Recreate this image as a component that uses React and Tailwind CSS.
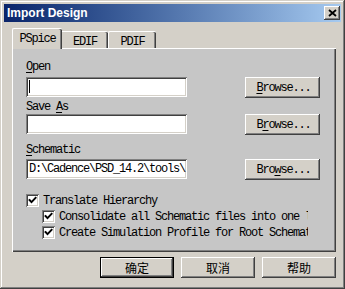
import React from "react";

const raised =
  "shadow-[inset_-1px_-1px_#404040,inset_1px_1px_#ffffff,inset_-2px_-2px_#808080,inset_2px_2px_#d4d0c8]";
const sunken =
  "shadow-[inset_1px_1px_#808080,inset_-1px_-1px_#ffffff,inset_2px_2px_#404040,inset_-2px_-2px_#d4d0c8]";
const mono = "font-['Liberation_Mono','DejaVu_Sans_Mono',monospace] text-[12px] tracking-[-1.2px] leading-[12px] text-black";

function Check() {
  return (
    <div className={`w-[13px] h-[13px] bg-white ${sunken} flex items-center justify-center shrink-0`}>
      <svg width="9" height="9" viewBox="0 0 9 9">
        <path d="M1.5 4 L3.5 6.2 L7.6 1.8" fill="none" stroke="#000" strokeWidth="1.9" strokeLinecap="square" />
      </svg>
    </div>
  );
}

function Btn({ children, def, cls = "" }) {
  return (
    <div
      className={`w-[74px] h-[21px] bg-[#d4d0c8] flex items-center justify-center ${
        def
          ? "shadow-[inset_0_0_0_1px_#000000,inset_-2px_-2px_#404040,inset_2px_2px_#ffffff,inset_-3px_-3px_#808080]"
          : raised
      } ${cls}`}
    >
      {children}
    </div>
  );
}

function Browse({ u }) {
  const letters = "Browse...".split("");
  return (
    <Btn cls="w-[75px] h-[21px]">
      <span className={`${mono} pl-[2px]`}>
        {letters.map((c, i) => (
          <span key={i} className={i === u ? "underline underline-offset-2" : ""}>
            {c}
          </span>
        ))}
      </span>
    </Btn>
  );
}

export default function App() {
  return (
    <div
      className={`w-[345px] h-[289px] bg-[#d4d0c8] p-[4px] flex flex-col shadow-[inset_-1px_-1px_#404040,inset_1px_1px_#d4d0c8,inset_-2px_-2px_#808080,inset_2px_2px_#ffffff] overflow-hidden`}
    >
      {/* title bar */}
      <div className="h-[18px] w-[337px] bg-gradient-to-r from-[#0a246a] to-[#a6caf0] flex items-center justify-between pl-[3px] pr-[1px]">
        <span className="font-['Liberation_Sans',Arial,sans-serif] font-bold text-[12px] text-white leading-[14px]">
          Import Design
        </span>
        <div className={`w-[16px] h-[14px] bg-[#d4d0c8] ${raised} flex items-center justify-center`}>
          <svg width="9" height="8" viewBox="0 0 9 8">
            <path d="M1 1 L8 7 M8 1 L1 7" stroke="#000" strokeWidth="1.8" fill="none" />
          </svg>
        </div>
      </div>

      {/* tabs */}
      <div className="ml-[8px] mt-[6px] flex items-end h-[20px] relative z-10">
        <div className="w-[50px] h-[21px] -mb-[1px] bg-[#d4d0c8] border-l border-t border-white rounded-tl-[2px] rounded-tr-[2px] shadow-[inset_-1px_0_#404040,inset_-2px_0_#808080] flex justify-center pt-[4px]">
          <span className={mono}>PSpice</span>
        </div>
        <div className="w-[46px] h-[17px] bg-[#d4d0c8] border-t border-white rounded-tr-[2px] shadow-[inset_-1px_0_#404040,inset_-2px_0_#808080] flex justify-center pt-[4px]">
          <span className={mono}>EDIF</span>
        </div>
        <div className="w-[48px] h-[17px] bg-[#d4d0c8] border-t border-l border-white rounded-tl-[2px] rounded-tr-[2px] shadow-[inset_-1px_0_#404040,inset_-2px_0_#808080] flex justify-center pt-[4px]">
          <span className={mono}>PDIF</span>
        </div>
      </div>

      {/* panel */}
      <div className="ml-[8px] w-[324px] h-[204px] bg-[#c6c6c6] shadow-[inset_1px_1px_#ffffff,inset_-1px_-1px_#404040,inset_-2px_-2px_#808080] pt-[13px] pl-[14px] flex flex-col">
        <div className={mono}>
          <span className="underline underline-offset-2">O</span>pen
        </div>
        <div className="flex mt-[4px]">
          <div className={`w-[161px] h-[20px] bg-white ${sunken} relative`}>
            <div className="absolute left-[3px] top-[3px] w-[1px] h-[13px] bg-black" />
          </div>
          <div className="ml-[58px]">
            <Browse u={0} />
          </div>
        </div>
        <div className={`${mono} mt-[3px]`}>
          Save <span className="underline underline-offset-2">A</span>s
        </div>
        <div className="flex mt-[1px]">
          <div className={`w-[161px] h-[20px] bg-white ${sunken}`} />
          <div className="ml-[58px]">
            <Browse u={1} />
          </div>
        </div>
        <div className={`${mono} mt-[9px]`}>
          <span className="underline underline-offset-2">S</span>chematic
        </div>
        <div className="flex mt-[3px]">
          <div className={`w-[161px] h-[20px] bg-white ${sunken} overflow-hidden pl-[3px] pt-[4px]`}>
            <div className={`${mono} whitespace-nowrap`}>D:\Cadence\PSD_14.2\tools\</div>
          </div>
          <div className="ml-[58px]">
            <Browse u={3} />
          </div>
        </div>

        <div className="flex items-center mt-[14px] h-[13px]">
          <Check />
          <span className={`${mono} ml-[4px] whitespace-nowrap`}>Translate Hierarchy</span>
        </div>
        <div className="flex items-center mt-[3px] h-[13px] ml-[16px]">
          <Check />
          <span className={`${mono} ml-[4px] whitespace-nowrap overflow-hidden w-[249px]`}>
            Consolidate all Schematic files into one library
          </span>
        </div>
        <div className="flex items-center mt-[3px] h-[13px] ml-[16px]">
          <Check />
          <span className={`${mono} ml-[4px] whitespace-nowrap overflow-hidden w-[249px]`}>
            Create Simulation Profile for Root Schematic
          </span>
        </div>
      </div>

      {/* bottom buttons */}
      <div className="ml-[96px] mt-[5px] flex gap-[7px] font-['Noto_Sans_CJK_SC',sans-serif] text-[12px] leading-[14px] text-black">
        <Btn def>确定</Btn>
        <Btn>取消</Btn>
        <Btn>帮助</Btn>
      </div>
    </div>
  );
}
